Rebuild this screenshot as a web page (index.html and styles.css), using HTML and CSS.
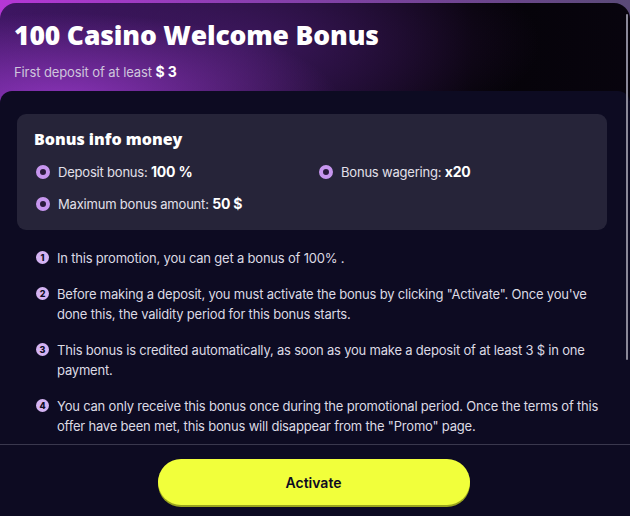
FILE: index.html
```html
<!DOCTYPE html>
<html>
<head>
<meta charset="utf-8">
<link rel="stylesheet" href="styles.css">
</head>
<body>
<div class="modal">
  <div class="header">
    <h1 class="title">100 Casino Welcome Bonus</h1>
    <p class="subtitle">First deposit of at least <b>$ 3</b></p>
  </div>
  <div class="content">
    <div class="card">
      <h2 class="card-title">Bonus info money</h2>
      <div class="grid">
        <div class="item"><span class="ring"></span><span>Deposit bonus: <b>100 %</b></span></div>
        <div class="item"><span class="ring"></span><span>Bonus wagering: <b>x20</b></span></div>
        <div class="item"><span class="ring"></span><span>Maximum bonus amount: <b>50 $</b></span></div>
      </div>
    </div>
    <ol class="rules">
      <li><span class="num">1</span><span>In this promotion, you can get a bonus of 100% .</span></li>
      <li><span class="num">2</span><span>Before making a deposit, you must activate the bonus by clicking "Activate". Once you've done this, the validity period for this bonus starts.</span></li>
      <li><span class="num">3</span><span>This bonus is credited automatically, as soon as you make a deposit of at least 3 $ in one payment.</span></li>
      <li><span class="num">4</span><span>You can only receive this bonus once during the promotional period. Once the terms of this offer have been met, this bonus will disappear from the "Promo" page.</span></li>
    </ol>
  </div>
  <div class="footer">
    <button class="btn">Activate</button>
  </div>
  <div class="scrollbar"></div>
</div>
</body>
</html>
```
FILE: styles.css
```css
html, body {
  margin: 0;
  padding: 0;
  background: #0d0b22;
}
.modal {
  position: relative;
  width: 630px;
  height: 516px;
  overflow: hidden;
  display: flex;
  flex-direction: column;
  background: linear-gradient(90deg, #b537d6 0%, #8a3fb0 40%, #5a4a78 100%);
  font-family: Inter, "Liberation Sans", sans-serif;
}
.header {
  height: 98px;
  margin-top: 3px;
  border-radius: 16px 16px 0 0;
  padding: 14px 14px 0;
  box-sizing: border-box;
  background:
    radial-gradient(ellipse 280px 90px at 60px 100px, rgba(160, 60, 210, 0.8), rgba(120, 40, 170, 0) 100%),
    radial-gradient(ellipse 300px 110px at 240px 40px, rgba(80, 30, 120, 0.6), rgba(80, 30, 120, 0) 100%),
    linear-gradient(90deg, #3c1560 0%, #1a0b2c 45%, #050308 75%, #08040e 100%);
  flex-shrink: 0;
}
.title {
  margin: 0;
  color: #ffffff;
  font-family: "Open Sans", sans-serif;
  font-weight: 800;
  font-size: 26.5px;
  line-height: 36px;
  letter-spacing: -0.15px;
}
.subtitle {
  margin: 10px 0 0;
  color: #cfc6dc;
  font-size: 13px;
  letter-spacing: -0.1px;
}
.subtitle b {
  color: #ffffff;
  font-weight: 700;
  font-size: 14px;
}
.content {
  background: #0d0b22;
  border-radius: 12px 12px 0 0;
  margin-top: -10px;
  padding: 23px 23px 0 17px;
  flex: 1;
  min-height: 0;
}
.card {
  background: #262439;
  border-radius: 9px;
  padding: 14px 17px 12px;
  height: 116px;
  box-sizing: border-box;
}
.card-title {
  margin: 0 0 12px;
  color: #ffffff;
  font-family: "Open Sans", sans-serif;
  font-weight: 800;
  font-size: 16px;
  line-height: 22px;
}
.grid {
  display: grid;
  grid-template-columns: 283px 1fr;
  row-gap: 12px;
  padding-left: 2px;
}
.item {
  display: flex;
  align-items: center;
  gap: 8px;
  color: #e2e0ea;
  font-size: 13px;
  line-height: 20px;
  letter-spacing: -0.2px;
}
.item b {
  color: #ffffff;
  font-weight: 700;
  font-size: 14px;
}
.ring {
  width: 14px;
  height: 14px;
  box-sizing: border-box;
  border: 4px solid #c796ef;
  background: #2a1a3d;
  border-radius: 50%;
  flex-shrink: 0;
}
.rules {
  list-style: none;
  margin: 0;
  padding: 18px 0 0 19px;
}
.rules li {
  display: flex;
  gap: 8px;
  color: #dcdae4;
  font-size: 13px;
  line-height: 20px;
  letter-spacing: -0.2px;
  margin-bottom: 16px;
}
.num {
  width: 13px;
  height: 13px;
  margin-top: 3px;
  border-radius: 50%;
  background: #d4b3f3;
  color: #0d0b22;
  font-size: 9px;
  font-weight: 800;
  line-height: 13px;
  text-align: center;
  letter-spacing: 0;
  flex-shrink: 0;
}
.footer {
  height: 72px;
  flex-shrink: 0;
  background: #0d0b22;
  border-top: 1px solid #3a384e;
  display: flex;
  justify-content: center;
  padding-top: 14px;
  box-sizing: border-box;
}
.btn {
  width: 312px;
  height: 46px;
  margin-left: -3px;
  border: none;
  border-radius: 23px;
  background: #f1ff3b;
  box-shadow: 0 2px 0 #9aa51e;
  color: #0d0b22;
  font-family: Inter, "Liberation Sans", sans-serif;
  font-size: 14px;
  font-weight: 600;
}
.scrollbar {
  position: absolute;
  right: 2px;
  top: 14px;
  width: 2px;
  height: 346px;
  background: #8a8898;
  border-radius: 1px;
}
```
